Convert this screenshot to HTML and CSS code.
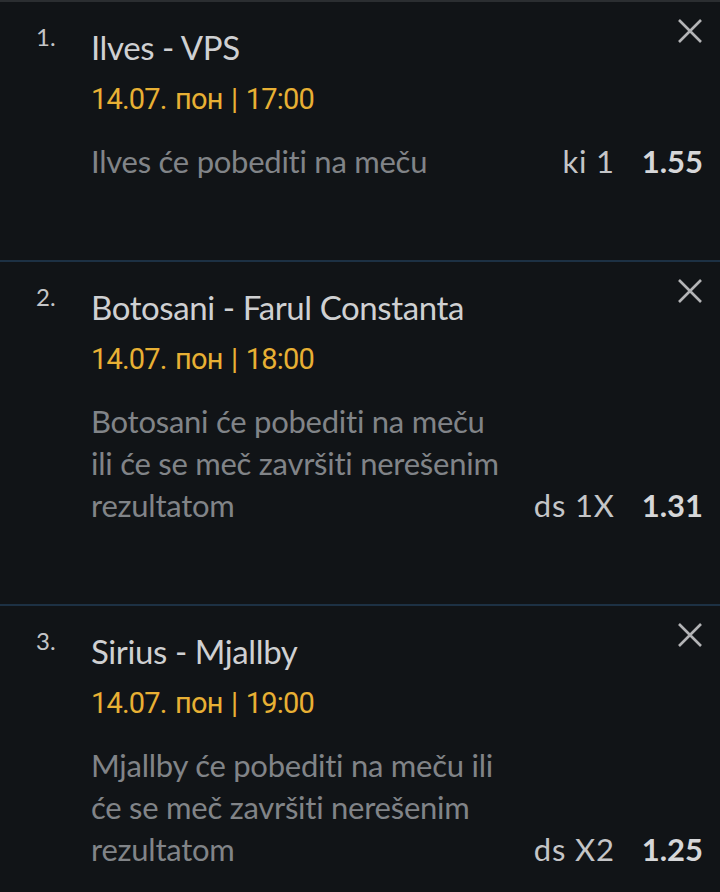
FILE: index.html
```html
<!DOCTYPE html>
<html lang="sr">
<head>
    <meta charset="UTF-8">
    <meta name="viewport" content="width=device-width, initial-scale=1.0">
    <title>Tiket</title>

    <link rel="stylesheet" href="styles.css">
</head>
<body>

    <div class="slip">

        <div class="pick">
            <div class="pick-num">1.</div>
            <div class="pick-body">
                <div class="pick-match">Ilves - VPS</div>
                <div class="pick-date">14.07. пон | 17:00</div>
                <div class="pick-desc">Ilves će pobediti na meču</div>
            </div>
            <div class="pick-side">
                <button class="pick-remove" type="button" aria-label="Ukloni">
                    <svg width="26" height="26" viewBox="0 0 26 26"><path d="M2 2L24 24M24 2L2 24" stroke="currentColor" stroke-width="2.6" fill="none"/></svg>
                </button>
                <div class="pick-odd">
                    <span class="pick-type">ki 1</span>
                    <span class="pick-value">1.55</span>
                </div>
            </div>
        </div>

        <div class="pick">
            <div class="pick-num">2.</div>
            <div class="pick-body">
                <div class="pick-match">Botosani - Farul Constanta</div>
                <div class="pick-date">14.07. пон | 18:00</div>
                <div class="pick-desc">Botosani će pobediti na meču<br>ili će se meč završiti nerešenim<br>rezultatom</div>
            </div>
            <div class="pick-side">
                <button class="pick-remove" type="button" aria-label="Ukloni">
                    <svg width="26" height="26" viewBox="0 0 26 26"><path d="M2 2L24 24M24 2L2 24" stroke="currentColor" stroke-width="2.6" fill="none"/></svg>
                </button>
                <div class="pick-odd">
                    <span class="pick-type">ds 1X</span>
                    <span class="pick-value">1.31</span>
                </div>
            </div>
        </div>

        <div class="pick">
            <div class="pick-num">3.</div>
            <div class="pick-body">
                <div class="pick-match">Sirius - Mjallby</div>
                <div class="pick-date">14.07. пон | 19:00</div>
                <div class="pick-desc">Mjallby će pobediti na meču ili<br>će se meč završiti nerešenim<br>rezultatom</div>
            </div>
            <div class="pick-side">
                <button class="pick-remove" type="button" aria-label="Ukloni">
                    <svg width="26" height="26" viewBox="0 0 26 26"><path d="M2 2L24 24M24 2L2 24" stroke="currentColor" stroke-width="2.6" fill="none"/></svg>
                </button>
                <div class="pick-odd">
                    <span class="pick-type">ds X2</span>
                    <span class="pick-value">1.25</span>
                </div>
            </div>
        </div>

    </div>

</body>
</html>
```

FILE: styles.css
```css
body {
    margin: 0;
    padding: 0;
    background-color: #111417;
    font-family: Lato, "Noto Sans", sans-serif;
    overflow: hidden;
}

.slip {
    border-top: 2px solid #2b2e31;
}

.pick {
    display: flex;
    padding: 16px 17px 78px 36px;
    border-bottom: 2px solid #1d3144;
}

.pick-num {
    width: 55px;
    flex-shrink: 0;
    padding-top: 6px;
    font-size: 24px;
    line-height: 26px;
    color: #c4c5c7;
}

.pick-body {
    flex: 1;
    padding-top: 7px;
}

.pick-match {
    font-size: 33px;
    line-height: 44px;
    letter-spacing: -0.4px;
    color: #cfd0d2;
}

.pick-date {
    margin-top: 10px;
    font-family: Roboto, sans-serif;
    font-size: 29px;
    line-height: 40px;
    letter-spacing: -0.8px;
    word-spacing: 2px;
    color: #e8b034;
}

.pick-desc {
    margin-top: 21px;
    font-size: 31px;
    line-height: 42px;
    letter-spacing: -0.25px;
    color: #818488;
}

.pick-side {
    display: flex;
    flex-direction: column;
    justify-content: space-between;
    align-items: flex-end;
}

.pick-remove {
    width: 26px;
    height: 26px;
    padding: 0;
    border: none;
    background: none;
    color: #b3b4b6;
    cursor: pointer;
}

.pick-remove svg {
    display: block;
}

.pick-odd {
    display: flex;
    gap: 27px;
    white-space: nowrap;
    font-size: 31px;
    line-height: 42px;
}

.pick-type {
    letter-spacing: 0.8px;
    color: #c4c5c7;
}

.pick-value {
    font-weight: bold;
    color: #d6d7d9;
}
```
